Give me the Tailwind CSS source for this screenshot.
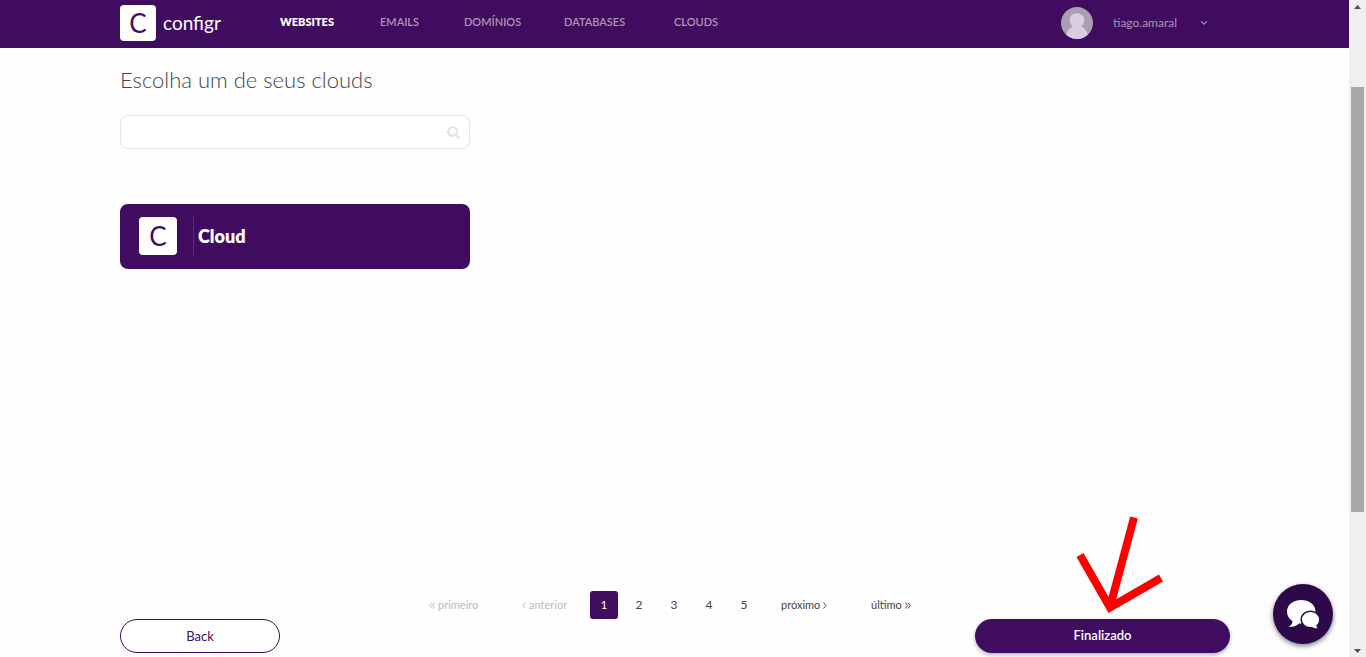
<!DOCTYPE html>
<html lang="pt-BR">
<head>
<meta charset="utf-8">
<meta name="viewport" content="width=device-width, initial-scale=1">
<title>configr</title>
<script src="https://cdn.jsdelivr.net/npm/@tailwindcss/browser@4"></script>
</head>
<body class="flex h-screen overflow-hidden bg-[#fefefe] font-['Lato',sans-serif] text-[#444]">
<div class="flex min-w-0 flex-1 flex-col">
  <header class="flex h-12 shrink-0 items-center bg-[#400c5f] pr-[119px] pb-0.5 pl-[120px]">
    <a href="#" class="flex w-[101px] items-center gap-[7px] text-white">
      <span class="flex size-9 shrink-0 items-center justify-center rounded bg-white text-[26px] leading-none text-[#400c5f]">C</span>
      <span class="text-[19px] leading-6">configr</span>
    </a>
    <nav class="ml-[59px] flex gap-11 pb-0.5 text-[11px] leading-4 font-semibold text-[#ac96b7]">
      <a href="#" class="w-14 font-extrabold whitespace-nowrap text-white">WEBSITES</a>
      <a href="#" class="w-10 whitespace-nowrap">EMAILS</a>
      <a href="#" class="w-14 whitespace-nowrap">DOMÍNIOS</a>
      <a href="#" class="w-[66px] whitespace-nowrap">DATABASES</a>
      <a href="#" class="whitespace-nowrap">CLOUDS</a>
    </nav>
    <button type="button" class="mr-[22px] ml-auto flex items-center text-xs text-[#ac96b7]">
      <svg class="size-8 rounded-full" viewBox="0 0 32 32" aria-hidden="true"><rect width="32" height="32" fill="#aa9fb1"/><circle cx="16" cy="13.500" r="7.300" fill="#d9cde0"/><path d="M4.500 32C5 24 9 20 13 19.500h6C23 20 27 24 27.500 32Z" fill="#d9cde0"/></svg>
      <span class="ml-5 w-[67px] text-left">tiago.amaral</span>
      <svg class="ml-5 h-1.5 w-2" viewBox="0 0 8 6" fill="none" stroke="currentColor" stroke-width="1.100" aria-hidden="true"><path d="M1 1.200 4 4.200 7 1.200"/></svg>
    </button>
  </header>
  <main class="flex flex-1 flex-col pr-[119px] pb-1 pl-[120px]">
    <h1 class="mt-4 text-[22px] leading-8 font-light">Escolha um de seus clouds</h1>
    <label class="relative mt-[19px] block w-[350px]">
      <input type="search" aria-label="Buscar cloud" class="block h-[34px] w-full rounded-lg border border-[#e5e5e5] bg-white pr-9 pl-3 text-sm outline-none">
      <svg class="absolute top-[11px] right-2.5 size-[13px]" viewBox="0 0 13 13" fill="none" stroke="#e3e3e3" stroke-width="2.200" stroke-linecap="round" aria-hidden="true"><circle cx="5.500" cy="5.500" r="4.300"/><path d="m8.800 8.800 3 3"/></svg>
    </label>
    <button type="button" class="mt-[55px] flex h-[65px] w-[350px] items-center rounded-lg bg-[#400c5f] pb-px pl-[19px] text-white">
      <span class="flex size-[38px] items-center justify-center rounded bg-white text-[26px] leading-none text-[#400c5f]">C</span>
      <span class="ml-4 flex h-[41px] items-center border-l border-[#6d1aa0] pl-1 text-[18px] font-extrabold">Cloud</span>
    </button>
    <nav aria-label="Paginação" class="mt-auto ml-[309px] flex h-7 items-center text-[11px]">
      <a href="#" class="flex w-[93px] items-center gap-[3px] text-[#bbb]"><svg class="h-[7px] w-1.5" viewBox="0 0 6 7" fill="none" stroke="currentColor" aria-hidden="true"><path d="M3 .5 .7 3.500 3 6.500M5.700 .5 3.400 3.500 5.700 6.500"/></svg>primeiro</a>
      <a href="#" class="flex w-[68px] items-center gap-[3px] text-[#bbb]"><svg class="h-[7px] w-1" viewBox="0 0 4 7" fill="none" stroke="currentColor" aria-hidden="true"><path d="M3.500 .5 1 3.500 3.500 6.500"/></svg>anterior</a>
      <span class="flex gap-[7px] text-center text-xs leading-7">
        <a href="#" aria-current="page" class="w-7 rounded-[3px] bg-[#400c5f] text-white">1</a>
        <a href="#" class="w-7">2</a><a href="#" class="w-7">3</a><a href="#" class="w-7">4</a><a href="#" class="w-7">5</a>
      </span>
      <a href="#" class="ml-[23px] flex w-[90px] items-center gap-[3px]">próximo<svg class="h-[7px] w-1" viewBox="0 0 4 7" fill="none" stroke="currentColor" aria-hidden="true"><path d="M.5 .5 3 3.500 .5 6.500"/></svg></a>
      <a href="#" class="flex items-center gap-[3px]">último<svg class="h-[7px] w-1.5" viewBox="0 0 6 7" fill="none" stroke="currentColor" aria-hidden="true"><path d="M.3 .5 2.600 3.500 .3 6.500M3 .5 5.300 3.500 3 6.500"/></svg></a>
    </nav>
    <div class="flex justify-between text-[13px] leading-8">
      <button type="button" class="h-[34px] w-40 rounded-full border border-[#400c5f] bg-white pb-0.5 text-[#400c5f]">Back</button>
      <div class="relative">
        <button type="button" class="h-[34px] w-[255px] rounded-full bg-[#400c5f] pb-0.5 font-semibold text-white shadow-[0_2px_4px_rgba(0,0,0,0.3)]">Finalizado</button>
        <svg class="pointer-events-none absolute -top-[103px] left-[100px] h-[98px] w-[90px]" viewBox="0 0 90 98" fill="none" stroke="#f00" stroke-width="8" aria-hidden="true"><path d="M59 1.500 35 91M5 39l30 52.500L86 62"/></svg>
      </div>
    </div>
  </main>
</div>
<div aria-hidden="true" class="flex w-[17px] shrink-0 flex-col items-center bg-[#efefef]">
  <svg class="mt-[5px] h-1 w-[7px]" viewBox="0 0 7 4"><path d="M0 4 3.500 0 7 4Z" fill="#505050"/></svg>
  <div class="mt-[78px] h-[425px] w-[13px] bg-[#a8a8a8]"></div>
  <svg class="mt-auto mb-1 h-1 w-[7px]" viewBox="0 0 7 4"><path d="M0 0h7L3.500 4Z" fill="#505050"/></svg>
</div>
<button type="button" aria-label="Chat" class="fixed right-[33px] bottom-[13px] flex size-[60px] items-center justify-center rounded-full bg-[#2e0949] shadow-[0_2px_5px_rgba(0,0,0,0.5)]">
  <svg class="h-[30px] w-[34px]" viewBox="0 0 34 30" aria-hidden="true"><path fill="#fff" d="M15 1C7 1 1 6 1 12.500c0 4 2 7.500 5.500 9.700C6.300 24.500 5 26.500 2.500 27.700c5 .2 8-.8 10.500-3.300h2C23 24.400 29.500 19.500 29.500 12.500S23 1 15 1Z"/><path fill="#fff" stroke="#2e0949" stroke-width="1.500" d="M24.500 12.200c-5.300 0-9.300 3.600-9.300 8.300s4 8.300 9.300 8.300h1.500c2 1.300 4.500 1.500 7.500 1-1.500-.9-2.200-2-2.400-3.200 1.800-1.500 2.700-3.500 2.700-6.100 0-4.700-4-8.300-9.300-8.300Z"/></svg>
</button>
</body>
</html>
